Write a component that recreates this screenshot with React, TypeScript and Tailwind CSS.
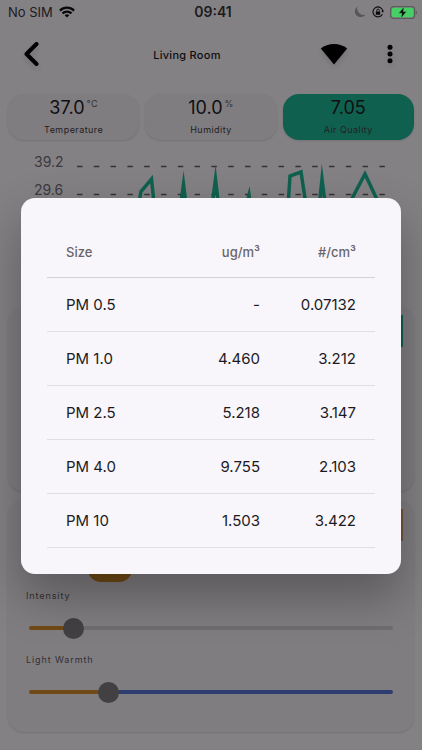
import { useState } from "react";

const sensors = [
  { label: "Temperature", value: "37.0", unit: "°C", active: false },
  { label: "Humidity", value: "10.0", unit: "%", active: false },
  { label: "Air Quality", value: "7.05", unit: "", active: true },
];

const particles = [
  { size: "PM 0.5", mass: "-", count: "0.07132" },
  { size: "PM 1.0", mass: "4.460", count: "3.212" },
  { size: "PM 2.5", mass: "5.218", count: "3.147" },
  { size: "PM 4.0", mass: "9.755", count: "2.103" },
  { size: "PM 10", mass: "1.503", count: "3.422" },
];

function StatusBar() {
  return (
    <div className="relative z-20 grid h-6 grid-cols-3 items-center pr-1 pl-2 text-sm text-[#1c1b1d]">
      <div className="flex items-center gap-1.5">
        <span className="text-[13px]">No SIM</span>
        <svg className="h-3 w-4" viewBox="0 0 16 12" fill="none" stroke="#080808" strokeWidth="2.2">
          <path d="M.9 4.6a10.2 10.2 0 0 1 14.2 0" />
          <path d="M3.5 7.4a6.4 6.4 0 0 1 9 0" />
          <path d="M8 11.6 5.7 9.3a3.3 3.3 0 0 1 4.6 0Z" fill="#080808" stroke="none" />
        </svg>
      </div>
      <span className="text-center font-semibold">09:41</span>
      <div className="flex items-center justify-end gap-1.5">
        <svg className="h-3 w-3" viewBox="0 0 12 12" fill="#575558">
          <path d="M3.600.4a5.800 5.800 0 1 0 8 8A6.200 6.200 0 0 1 3.600.4Z" />
        </svg>
        <svg className="h-3 w-3" viewBox="0 0 12 12" fill="none" stroke="#0b0b0b">
          <path d="M10.9 5a5 5 0 1 0-.5 3.2" strokeWidth="1.1" />
          <path d="m9.300 4.800h2.700l-1.200 2Z" fill="#0b0b0b" stroke="none" />
          <rect x="3.8" y="5.4" width="4.4" height="3.3" rx=".5" fill="#0b0b0b" stroke="none" />
          <path d="M4.7 5.6V4.4a1.3 1.3 0 0 1 2.6 0v1.2" strokeWidth=".9" />
        </svg>
        <svg className="h-[13px] w-7" viewBox="0 0 28 13">
          <rect x=".6" y=".6" width="24" height="11.800" rx="3" fill="none" stroke="#5c5a5d" strokeWidth="1.2" />
          <rect x="1.800" y="1.800" width="21.600" height="9.400" rx="1.8" fill="#45cf66" />
          <path d="M25.8 4.500v4c1.600-.5 1.600-3.500 0-4Z" fill="#5c5a5d" />
          <path d="M14.200.8 8.600 7.200h3.300L10.900 12.200l5.700-6.700h-3.400Z" fill="#080808" stroke="#45cf66" strokeWidth=".5" />
        </svg>
      </div>
    </div>
  );
}

function TopBar() {
  return (
    <header className="flex h-[60px] items-center px-4">
      <button aria-label="Back" className="flex h-8 w-8 items-center justify-center drop-shadow-md">
        <svg className="h-8 w-8" viewBox="0 0 32 32" fill="none" stroke="#000" strokeWidth="4" strokeLinecap="round" strokeLinejoin="round">
          <path d="M20.500 6 10.500 16 20.500 26" />
        </svg>
      </button>
      <h1 className="flex-1 pt-0.5 pl-2 text-center text-[11px] font-medium tracking-wide text-[#1c1b1f]">Living Room</h1>
      <div className="flex items-center justify-end gap-6">
        <button aria-label="Wi-Fi" className="drop-shadow-md">
          <svg className="h-8 w-8" viewBox="0 0 32 32">
            <path d="M2.800 10.600C6.500 7.500 11 6 16 6s9.500 1.500 13.200 4.600L16 26.600Z" />
          </svg>
        </button>
        <button aria-label="More" className="drop-shadow-md">
          <svg className="h-8 w-8" viewBox="0 0 32 32">
            <circle cx="16" cy="9.300" r="2.500" />
            <circle cx="16" cy="16" r="2.500" />
            <circle cx="16" cy="22.700" r="2.500" />
          </svg>
        </button>
      </div>
    </header>
  );
}

function Chart() {
  return (
    <section className="mt-2 flex h-[150px]">
      <div className="w-[68px] shrink-0 pl-[34px] text-sm text-[#706c73]">
        <div className="flex h-7 items-center">39.2</div>
        <div className="flex h-7 items-center">29.6</div>
      </div>
      <svg className="h-[150px] flex-1" viewBox="0 0 354 150" preserveAspectRatio="xMinYMin meet" fill="none">
        <path d="M9 18.500H318M9 46.500H318" stroke="#605d62" strokeWidth="1.400" strokeDasharray="5.500 11.300" />
        <path
          d="M9 130 60 120 73 43.500 83.500 31 94 130 104 120 115.500 36 127 130 136 120 147.500 31 159 130 181 47 192 130 206 130 216 120 222 28 233 24 246 110 254 31 264 110 278 62 297 26 320 75"
          stroke="#1fb293"
          strokeWidth="3.500"
          strokeMiterlimit="12"
        />
      </svg>
    </section>
  );
}

function WarmSlider({ label, initial, rest }: { label: string; initial: number; rest: string }) {
  const [value, setValue] = useState(initial);
  const stop = `${value}%`;

  return (
    <label className="flex h-16 flex-col text-[9px] tracking-widest text-[#5f5b62]">
      <span className="flex h-4 items-center">{label}</span>
      <span className="flex h-12 items-center px-[3px]">
        <input
          type="range"
          min={0}
          max={100}
          value={value}
          onChange={(e) => setValue(Number(e.target.value))}
          className="h-1 w-full appearance-none rounded-full [&::-webkit-slider-thumb]:h-[21px] [&::-webkit-slider-thumb]:w-[21px] [&::-webkit-slider-thumb]:appearance-none [&::-webkit-slider-thumb]:rounded-full [&::-webkit-slider-thumb]:bg-[#7b777b]"
          style={{ background: `linear-gradient(to right, #d08a2a ${stop}, ${rest} ${stop})` }}
        />
      </span>
    </label>
  );
}

function ParticleDialog() {
  return (
    <div className="absolute inset-0 z-10 flex items-center justify-center bg-black/46 px-[21px] pt-[22px]">
      <div
        role="dialog"
        aria-label="Air Quality"
        className="w-full max-w-md rounded-[14px] bg-[#f8f6fa] px-[26px] pt-6 pb-[26px] shadow-[0_22px_48px_rgba(0,0,0,0.3)]"
      >
        <table className="w-full table-fixed border-collapse text-right text-[#1c1b1f]">
          <thead>
            <tr className="h-14 border-b border-[#d3d1d5] text-[13px] text-[#68656a]">
              <th className="pt-1.5 pl-[19px] text-left font-medium">Size</th>
              <th className="pt-1.5 pr-[19px] font-medium">ug/m³</th>
              <th className="w-24 pt-1.5 pr-[19px] font-medium">#/cm³</th>
            </tr>
          </thead>
          <tbody>
            {particles.map((row) => (
              <tr key={row.size} className="h-[54px] border-b border-[#e0dee2] text-[15px]">
                <td className="pl-[19px] text-left">{row.size}</td>
                <td className="pr-[19px]">{row.mass}</td>
                <td className="pr-[19px]">{row.count}</td>
              </tr>
            ))}
          </tbody>
        </table>
      </div>
    </div>
  );
}

export default function App() {
  return (
    <div className="relative min-h-screen bg-[#f4eff4] pb-[18px] font-['Inter',sans-serif]">
      <StatusBar />
      <TopBar />

      <main className="px-2 pt-2.5">
        {/* Sensor tabs */}
        <div className="grid grid-cols-3 gap-1.5">
          {sensors.map((s) => (
            <button
              key={s.label}
              className={
                s.active
                  ? "flex h-[46px] flex-col items-center rounded-2xl bg-[#1fb293] pt-1 text-[#1c1b1f] shadow-sm"
                  : "flex h-[46px] flex-col items-center rounded-2xl bg-[#ece7ec] pt-1 text-[#1c1b1f] shadow-sm"
              }
            >
              <span className="flex h-6 items-start text-lg leading-5">
                {s.value}
                {s.unit && <span className="pl-0.5 text-[9px] leading-3 tracking-wider text-[#5f5b62]">{s.unit}</span>}
              </span>
              <span className="text-[9px] leading-6 tracking-wider text-[#3f3c42]">{s.label}</span>
            </button>
          ))}
        </div>

        <div className="-mx-2">
          <Chart />
        </div>

        {/* Air card */}
        <section className="mt-2 flex h-[186px] items-start justify-end rounded-2xl bg-[#ece7ec] px-[11px] py-[9px] shadow-sm">
          <button aria-label="Air" className="h-8 w-12 bg-[#1fb293]" />
        </section>

        {/* Light card */}
        <section className="mt-2 rounded-2xl bg-[#ece7ec] pt-[9px] pb-4 shadow-sm">
          <div className="flex justify-end px-[11px]">
            <button aria-label="Light" className="h-8 w-12 bg-[#d99a6a]" />
          </div>
          <div className="mt-4 px-[80px]">
            <button aria-label="Power" className="block h-[25px] w-[44px] rounded-full bg-[#d08a2a]" />
          </div>
          <div className="mt-1.5 px-[18px]">
            <WarmSlider label="Intensity" initial={10} rest="#cfcacf" />
            <WarmSlider label="Light Warmth" initial={20} rest="#5570d0" />
          </div>
        </section>
      </main>

      <ParticleDialog />
    </div>
  );
}
